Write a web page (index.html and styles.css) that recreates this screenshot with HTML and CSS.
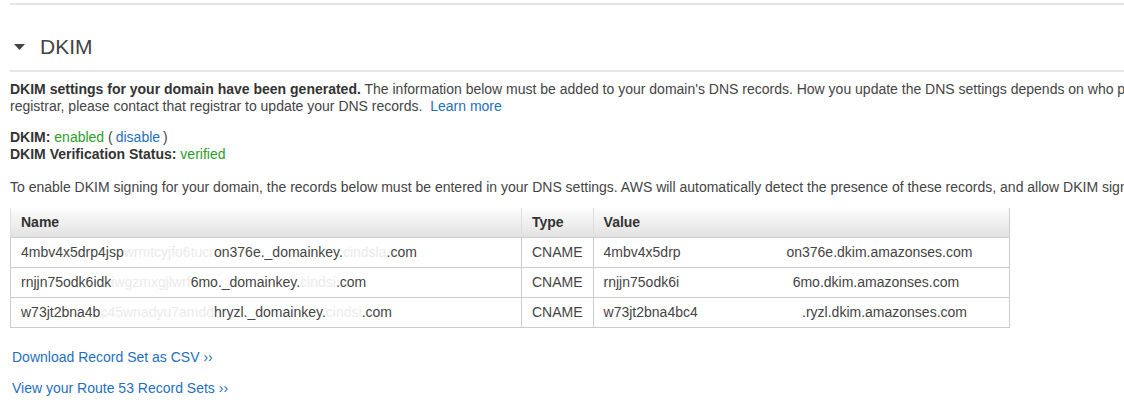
FILE: index.html
```html
<!DOCTYPE html>
<html>
<head>
<meta charset="utf-8">
<link rel="stylesheet" href="styles.css">
</head>
<body>
<div class="page">
  <div class="rule"></div>
  <div class="section-head">
    <svg class="caret" width="11" height="6" viewBox="0 0 11 6"><path d="M0 0 L11 0 L5.5 6 Z" fill="#444"/></svg>
    <h2>DKIM</h2>
  </div>
  <div class="rule"></div>
  <p class="intro"><b>DKIM settings for your domain have been generated.</b> The information below must be added to your domain's DNS records. How you update the DNS settings depends on who provides your DNS service; if your DNS service is provided by a domain name<br>registrar, please contact that registrar to update your DNS records. &nbsp;<a href="#">Learn more</a></p>
  <div class="status">
    <div><b>DKIM:</b> <span class="ok">enabled</span> (<a class="paren" href="#">disable</a>)</div>
    <div><b>DKIM Verification Status:</b> <span class="ok">verified</span></div>
  </div>
  <p class="note">To enable DKIM signing for your domain, the records below must be entered in your DNS settings. AWS will automatically detect the presence of these records, and allow DKIM signing at this time.</p>
  <table class="records">
    <thead>
      <tr><th class="c-name">Name</th><th class="c-type">Type</th><th class="c-value">Value</th></tr>
    </thead>
    <tbody>
      <tr>
        <td>4mbv4x5drp4jsp<span class="redact">wrmtcyjfo6tucr</span>on376e._domainkey.<span class="redact">cindsla</span>.com</td>
        <td>CNAME</td>
        <td>4mbv4x5drp<span class="blank">4jsprmtcyjfo6tucr</span>on376e.dkim.amazonses.com</td>
      </tr>
      <tr>
        <td>rnjjn75odk6idk<span class="redact">iwgzmxgjlwrf</span>6mo._domainkey.<span class="redact">cindsi</span>.com</td>
        <td>CNAME</td>
        <td>rnjjn75odk6i<span class="blank">dkiwgzmxgjlwrfam</span>6mo.dkim.amazonses.com</td>
      </tr>
      <tr>
        <td>w73jt2bna4b<span class="redact">c45wnadyu7amdd</span>hryzl._domainkey.<span class="redact">cindsi</span>.com</td>
        <td>CNAME</td>
        <td>w73jt2bna4bc4<span class="blank">5nnadyu7amddh</span>.ryzl.dkim.amazonses.com</td>
      </tr>
    </tbody>
  </table>
  <div class="links">
    <a href="#">Download Record Set as CSV ››</a>
    <a href="#">View your Route 53 Record Sets ››</a>
  </div>
</div>
</body>
</html>
```
FILE: styles.css
```css
html, body {
  margin: 0;
  padding: 0;
  background: #fff;
  overflow: hidden;
}
body {
  font-family: "Liberation Sans", Arial, sans-serif;
  font-size: 14px;
  line-height: 17px;
  color: #444;
}
.page {
  padding: 3px 0 0 10px;
  width: 1300px;
}
.rule {
  height: 2px;
  background: #e5e5e5;
}
.section-head {
  display: flex;
  align-items: center;
  height: 24px;
  padding: 30px 0 11px 4px;
}
.caret {
  display: block;
  margin-right: 15px;
}
.section-head h2 {
  margin: 0;
  font-size: 21px;
  font-weight: normal;
  line-height: 24px;
  color: #444;
}
a {
  color: #1f6fbf;
  text-decoration: none;
}
b {
  font-weight: bold;
  color: #333;
}
.ok {
  color: #2a9d2a;
}
.paren {
  margin: 0 3px;
}
.intro {
  margin: 9px 0 0;
  white-space: nowrap;
}
.status {
  margin-top: 14px;
}
.note {
  margin: 16px 0 0;
  white-space: nowrap;
}
.records {
  margin-top: 12px;
  width: 1000px;
  border-collapse: collapse;
  border-left: 1px solid #ccc;
  border-right: 1px solid #ccc;
}
.records th {
  height: 29px;
  padding: 0 10px;
  text-align: left;
  font-weight: bold;
  color: #333;
  background: linear-gradient(#fdfdfd, #e2e2e2);
  border-left: 1px solid #ddd;
  border-bottom: 1px solid #ccc;
}
.records td {
  height: 29px;
  padding: 0 10px;
  border-left: 1px solid #ccc;
  border-bottom: 1px solid #ccc;
  color: #444;
  white-space: nowrap;
}
.c-name { width: 490px; }
.c-type { width: 49px; }
.redact { color: #ebebeb; }
.blank { color: #fff; }
.links {
  display: flex;
  flex-direction: column;
  gap: 14px;
  margin-top: 21px;
  padding-left: 2px;
}
```
